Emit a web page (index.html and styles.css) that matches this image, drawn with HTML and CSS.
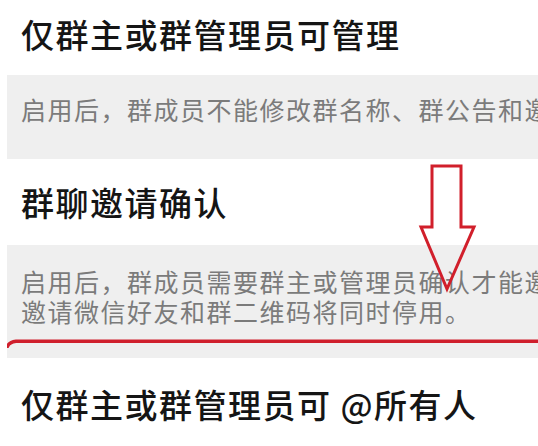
FILE: index.html
```html
<!DOCTYPE html>
<html lang="zh-CN">
<head>
<meta charset="utf-8">
<link rel="stylesheet" href="styles.css">
</head>
<body>
<div class="page">
  <div class="row row-first"><span class="title">仅群主或群管理员可管理</span></div>
  <div class="band band-one"><p class="desc">启用后，群成员不能修改群名称、群公告和邀请朋友进群。</p></div>
  <div class="row row-mid"><span class="title">群聊邀请确认</span></div>
  <div class="band band-two">
    <p class="desc">启用后，群成员需要群主或管理员确认才能邀请朋友进群。</p>
    <p class="desc">邀请微信好友和群二维码将同时停用。</p>
    <svg class="underline" width="531" height="10" viewBox="0 0 531 10">
      <path d="M0.5 8.5 Q2 4 9 3.2 L531 3.2" fill="none" stroke="#cf1f2c" stroke-width="3.4" stroke-linecap="round"/>
    </svg>
  </div>
  <div class="row row-last"><span class="title">仅群主或群管理员可 @所有人</span></div>
  <svg class="arrow" width="62" height="130" viewBox="0 0 62 130">
    <polygon points="14,2 43,2 43,63 56,63 29,125 3,63 14,63" fill="none" stroke="#d11f2b" stroke-width="3" stroke-linejoin="miter"/>
  </svg>
</div>
</body>
</html>
```

FILE: styles.css
```css
html, body {
  margin: 0;
  padding: 0;
  background: #ffffff;
}

.page {
  position: relative;
  width: 538px;
  height: 446px;
  overflow: hidden;
  padding-left: 7px;
  box-sizing: border-box;
  font-family: "Noto Sans CJK SC", "Noto Sans", sans-serif;
}

.row {
  display: flex;
  align-items: center;
  padding-left: 14px;
  background: #ffffff;
}

.row-first {
  height: 75px;
  padding-bottom: 8px;
  box-sizing: border-box;
}

.row-mid {
  height: 86px;
}

.row-last {
  height: 88px;
  padding-top: 3px;
  box-sizing: border-box;
}

.title {
  font-size: 33px;
  letter-spacing: 1.5px;
  color: #151515;
  font-weight: 500;
  white-space: nowrap;
}

.band {
  position: relative;
  background: #efefef;
  padding-left: 14px;
  box-sizing: border-box;
}

.band-one {
  height: 84px;
  padding-top: 19px;
}

.band-two {
  height: 113px;
  padding-top: 21px;
}

.desc {
  margin: 0;
  font-size: 25px;
  line-height: 30px;
  letter-spacing: 1.5px;
  color: #7b7b7b;
  white-space: nowrap;
  overflow: hidden;
}

.underline {
  position: absolute;
  left: 0;
  top: 93px;
}

.arrow {
  position: absolute;
  left: 418px;
  top: 164px;
}
```
